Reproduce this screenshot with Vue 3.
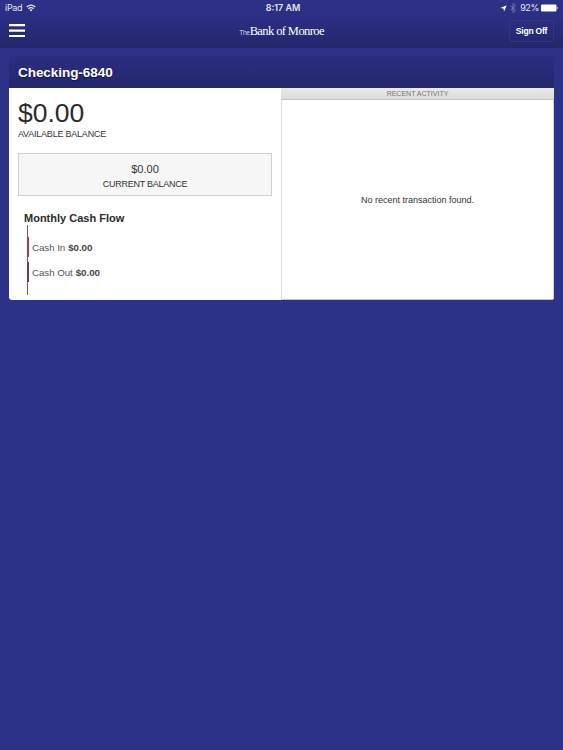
<template>
    <div class="screen">
        <header class="top-bar">
            <div class="status-bar">
                <div class="status-left">
                    <span class="device">iPad</span>
                    <svg class="wifi" viewBox="0 0 20 15">
                        <path d="M1.500 5.500 Q10 -2 18.500 5.500" />
                        <path d="M4.800 9 Q10 4.500 15.200 9" />
                        <path class="dot" d="M7 11.300 Q10 9 13 11.300 L10 14.500 Z" />
                    </svg>
                </div>
                <span class="clock">8:17 AM</span>
                <div class="status-right">
                    <svg class="location" viewBox="0 0 14 14">
                        <path d="M13.500 .5 L8 13.500 L7 7 L.5 6 Z" />
                    </svg>
                    <svg class="bluetooth" viewBox="0 0 12 20">
                        <path d="M1 5.500 L11 14.500 L6 19 V1 L11 5.500 L1 14.500" />
                    </svg>
                    <span class="percent">92%</span>
                    <svg class="battery" viewBox="0 0 18 8">
                        <rect x="0" y=".5" width="15.500" height="7" rx="1" />
                        <path d="M16.500 2.500 Q18 4 16.500 5.500 Z" />
                    </svg>
                </div>
            </div>
            <nav class="nav-bar">
                <button class="menu-button" aria-label="Menu">
                    <svg viewBox="0 0 16 13">
                        <path d="M0 1.100 H16 M0 6.600 H16 M0 12 H16" />
                    </svg>
                </button>
                <div class="brand"><span class="brand-the">The</span><span class="brand-name">Bank of Monroe</span></div>
                <button class="sign-off">Sign Off</button>
            </nav>
        </header>

        <main class="account-card">
            <h1 class="card-title">{{ account.name }}</h1>
            <div class="card-body">
                <section class="summary">
                    <div class="available">{{ account.available }}</div>
                    <div class="available-label">AVAILABLE BALANCE</div>
                    <div class="current">
                        <div class="current-amount">{{ account.current }}</div>
                        <div class="current-label">CURRENT BALANCE</div>
                    </div>
                    <h2 class="flow-title">Monthly Cash Flow</h2>
                    <ul class="flow">
                        <li v-for="row in cashFlow" :key="row.label" :class="row.type">
                            <span class="flow-label">{{ row.label }}</span>
                            <b>{{ row.amount }}</b>
                        </li>
                    </ul>
                </section>
                <section class="activity">
                    <h3 class="activity-title">RECENT ACTIVITY</h3>
                    <div class="activity-body">No recent transaction found.</div>
                </section>
            </div>
        </main>
    </div>
</template>

<script setup>
const account = {
    name: 'Checking-6840',
    available: '$0.00',
    current: '$0.00',
};

const cashFlow = [
    { label: 'Cash In', amount: '$0.00', type: 'in' },
    { label: 'Cash Out', amount: '$0.00', type: 'out' },
];
</script>

<style>
body {
    margin: 0;
    background: #2d3188;
}
</style>

<style scoped>
.screen {
    min-height: 750px;
    box-sizing: border-box;
    background: #2d3188;
    color: #333;
    font-family: "Liberation Sans", Arial, sans-serif;
}

h1,
h2,
h3,
ul {
    margin: 0;
    padding: 0;
}

.top-bar {
    height: 48px;
    background: linear-gradient(#2d3188 0, #2b2e82 20px, #24276a 48px);
    color: #fff;
}

.status-bar {
    display: grid;
    grid-template-columns: 1fr auto 1fr;
    align-items: center;
    height: 16px;
    padding: 0 4px 0 5px;
    color: #e4e4f2;
    font-family: Inter, sans-serif;
    font-size: 9px;
    line-height: 16px;
}

.status-left,
.status-right {
    display: flex;
    align-items: center;
}

.status-right {
    justify-content: flex-end;
}

.device {
    letter-spacing: -.3px;
}

.wifi {
    width: 10px;
    height: 8px;
    margin-left: 4px;
    fill: none;
    stroke: #e4e4f2;
    stroke-width: 2.2;
}

.wifi .dot {
    fill: #e4e4f2;
    stroke: none;
}

.clock {
    padding-left: 2px;
    font-weight: 600;
}

.location {
    width: 7px;
    height: 7px;
    margin-right: 3px;
    fill: #fff;
}

.bluetooth {
    width: 6px;
    height: 10px;
    margin-right: 4px;
    fill: none;
    stroke: #8083bd;
    stroke-width: 1.6;
}

.percent {
    letter-spacing: -.35px;
}

.battery {
    width: 18px;
    height: 8px;
    margin-left: 2px;
    fill: #fff;
}

.nav-bar {
    display: grid;
    grid-template-columns: 1fr auto 1fr;
    height: 32px;
    padding: 0 9px;
}

button {
    padding: 0;
    background: none;
    border: 0;
    color: #fff;
    font-family: inherit;
}

.menu-button {
    width: 16px;
    height: 13px;
    margin-top: 7.500px;
}

.menu-button svg {
    display: block;
    width: 16px;
    height: 13px;
    stroke: #fff;
    stroke-width: 2.2;
}

.brand {
    display: flex;
    align-items: baseline;
    line-height: 30px;
    white-space: nowrap;
}

.brand-the {
    width: 10.500px;
    font-size: 6.500px;
    letter-spacing: -.2px;
    color: #d8d8ec;
}

.brand-name {
    font-family: "Liberation Serif", "Times New Roman", serif;
    font-size: 12.500px;
    letter-spacing: -.6px;
}

.sign-off {
    justify-self: end;
    box-sizing: border-box;
    width: 45px;
    height: 22px;
    margin-top: 4px;
    border: 1px solid #34377f;
    border-radius: 3px;
    font-size: 8.500px;
    font-weight: bold;
    letter-spacing: -.2px;
    line-height: 19px;
}

.account-card {
    width: 545px;
    margin: 8px 0 0 9px;
    border-radius: 3px;
    overflow: hidden;
}

.card-title {
    height: 32px;
    padding-left: 9px;
    background: linear-gradient(#2b2e82, #24276c);
    color: #fff;
    font-size: 13.500px;
    letter-spacing: -.05px;
    line-height: 33px;
    text-shadow: 0 1px 1px #111344;
}

.card-body {
    display: flex;
    height: 212px;
    background: #fff;
}

.summary {
    width: 263px;
    padding: 0 0 0 9px;
}

.available {
    height: 39px;
    padding-top: 1px;
    color: #2b2b2b;
    font-size: 26.500px;
    line-height: 48px;
}

.available-label {
    height: 13px;
    font-size: 9px;
    letter-spacing: -.22px;
    line-height: 13px;
}

.current {
    box-sizing: border-box;
    width: 254px;
    height: 43px;
    margin-top: 12px;
    padding-top: 8px;
    border: 1px solid #d0d0d0;
    background: #f6f6f6;
    text-align: center;
}

.current-amount {
    font-size: 11px;
    line-height: 15px;
}

.current-label {
    font-size: 9px;
    letter-spacing: -.26px;
    line-height: 15px;
}

.flow-title {
    margin: 16px 0 0 6px;
    color: #2b2b2b;
    font-size: 11px;
    line-height: 13px;
}

.flow {
    height: 58px;
    margin-left: 9px;
    padding-top: 12px;
    border-left: 1px solid #66666a;
    list-style: none;
    color: #555;
    font-size: 9.800px;
}

.flow li {
    display: flex;
    gap: 3px;
    height: 20px;
    margin: 0 0 5px -1px;
    padding-left: 3px;
    border-left: 2px solid #a23f4c;
    letter-spacing: -.08px;
    line-height: 21px;
}

.flow .out {
    border-left-color: #79364e;
}

.flow b {
    color: #444;
}

.activity {
    width: 273px;
    margin-left: auto;
}

.activity-title {
    box-sizing: border-box;
    height: 12px;
    border-bottom: 1px solid #c6c6c8;
    background: linear-gradient(#e9e9ea, #dcdcdd);
    color: #77777a;
    font-size: 7px;
    font-weight: normal;
    line-height: 12px;
    text-align: center;
}

.activity-body {
    box-sizing: border-box;
    height: 200px;
    border: 1px solid #dddde2;
    border-top: 0;
    border-right-color: #ceceda;
    border-bottom-color: #c4c4dd;
    font-size: 9px;
    line-height: 200px;
    text-align: center;
}
</style>
